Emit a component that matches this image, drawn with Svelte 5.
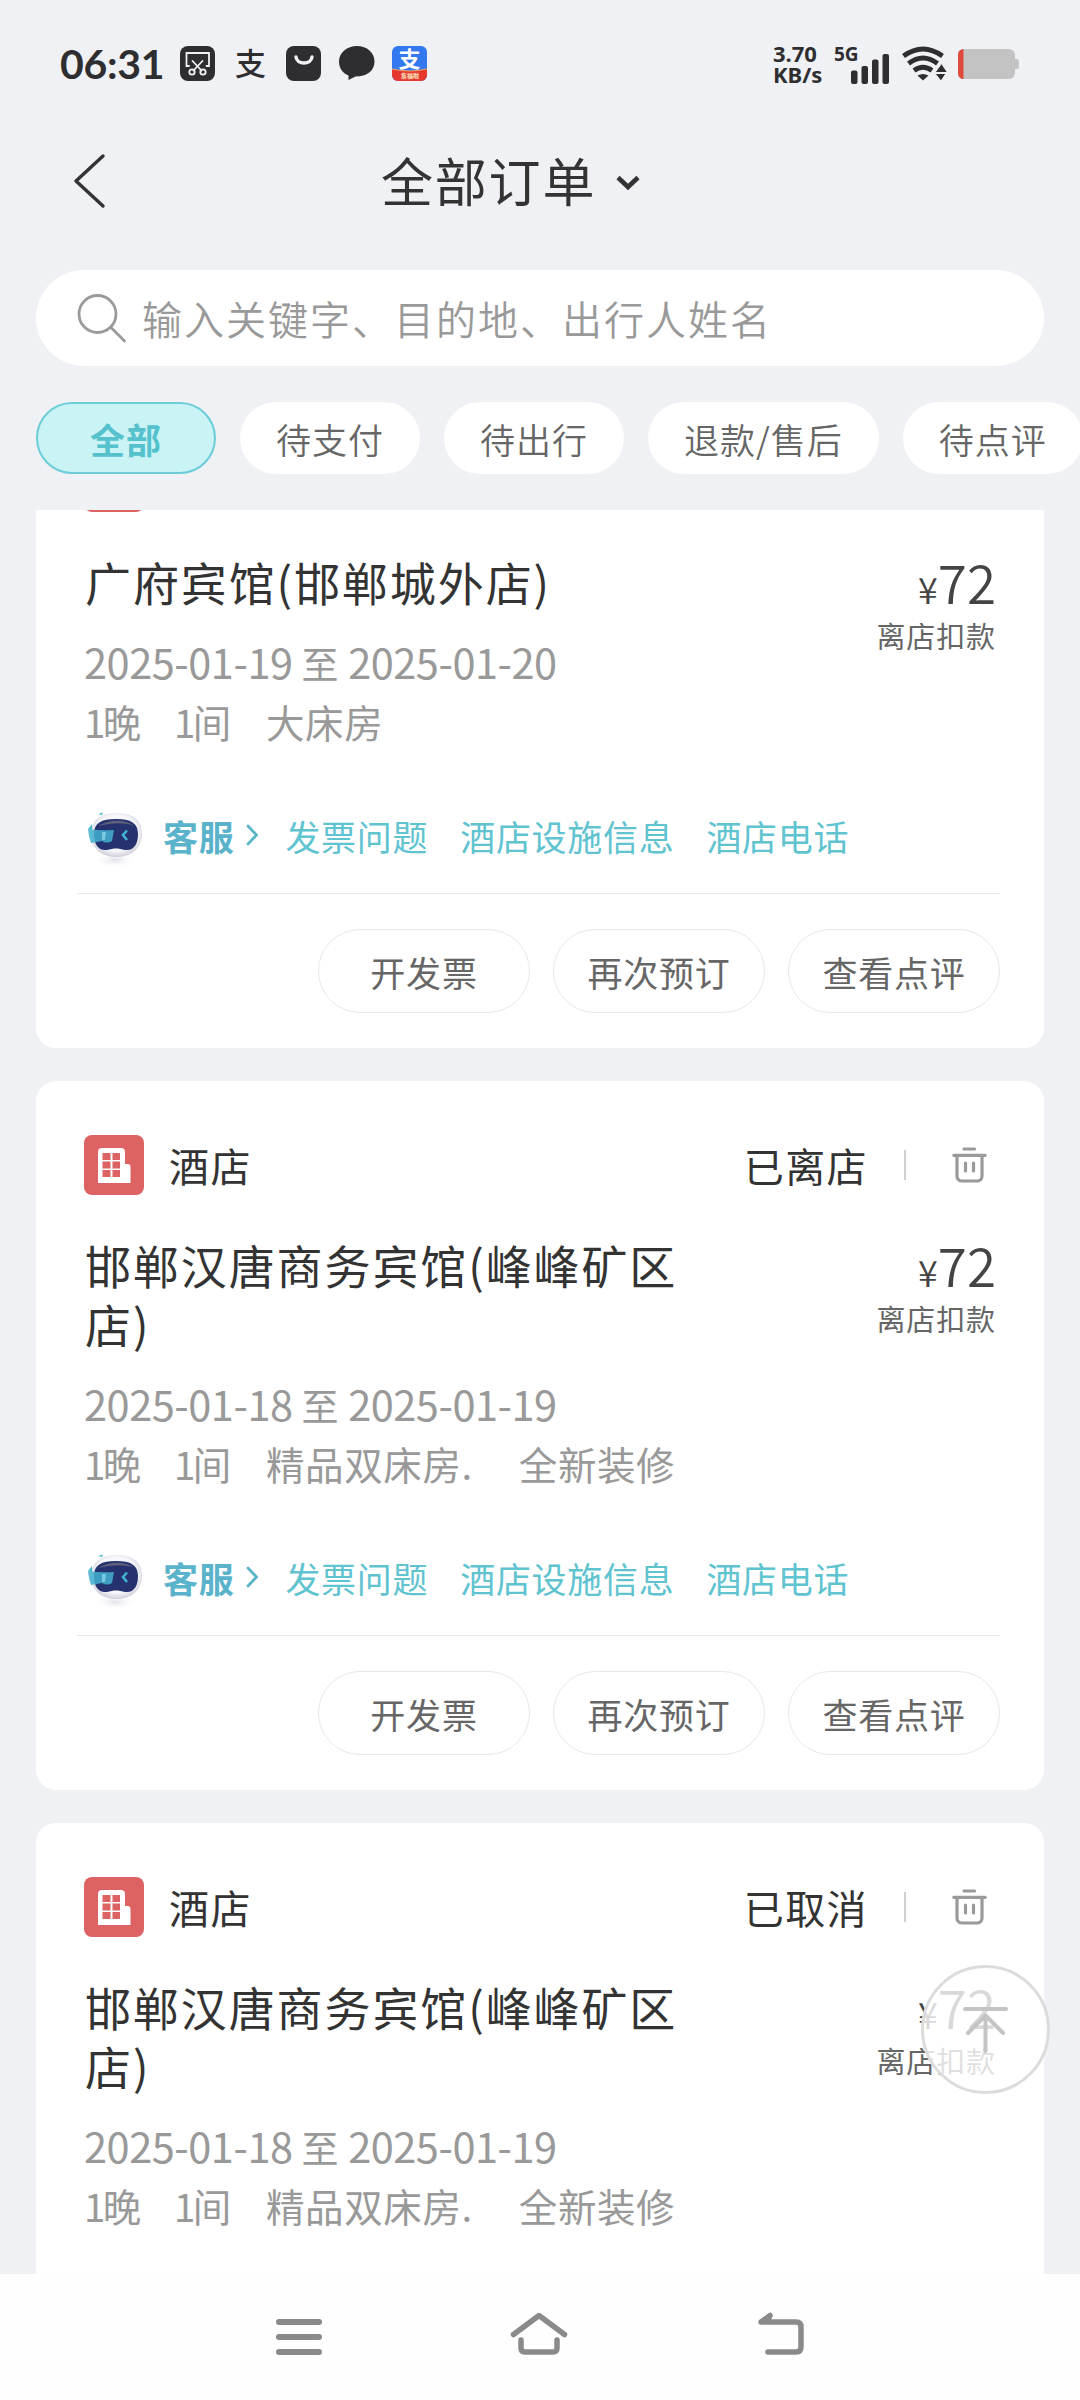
<script lang="ts">
  interface Order {
    status: string;
    hotel: string;
    from: string;
    to: string;
    room: string;
    note?: string;
  }

  const tabs = ['全部', '待支付', '待出行', '退款/售后', '待点评'];
  const questions = ['发票问题', '酒店设施信息', '酒店电话'];
  const actions = ['开发票', '再次预订', '查看点评'];

  const orders: Order[] = [
    {
      status: '已离店',
      hotel: '广府宾馆(邯郸城外店)',
      from: '2025-01-19',
      to: '2025-01-20',
      room: '大床房',
    },
    {
      status: '已离店',
      hotel: '邯郸汉唐商务宾馆(峰峰矿区店)',
      from: '2025-01-18',
      to: '2025-01-19',
      room: '精品双床房.',
      note: '全新装修',
    },
    {
      status: '已取消',
      hotel: '邯郸汉唐商务宾馆(峰峰矿区店)',
      from: '2025-01-18',
      to: '2025-01-19',
      room: '精品双床房.',
      note: '全新装修',
    },
  ];

  let active = $state('全部');
</script>

<div class="screen">
  <div class="status-bar">
    <span class="time">06:31</span>
    <div class="notifications">
      <svg width="36" height="36" viewBox="0 0 36 36">
        <rect width="35" height="35" rx="8" fill="#2e2e30" />
        <g fill="none" stroke="#f0f1f5" stroke-width="1.8" stroke-linecap="round">
          <path d="M9 20H6.500V7H29v13h-2.500" />
          <path d="M12.500 15l9 9.500M22.500 15l-9 9.500" />
          <circle cx="12" cy="26" r="2.700" />
          <circle cx="23" cy="26" r="2.700" />
        </g>
      </svg>
      <svg width="36" height="36" viewBox="0 0 36 36">
        <text class="zhi thin" x="2" y="29" font-size="31" fill="#2e2e30">支</text>
      </svg>
      <svg width="36" height="36" viewBox="0 0 36 36">
        <rect width="35" height="35" rx="8" fill="#2e2e30" />
        <path d="M10 11c1 8 15 8 16 0" fill="none" stroke="#f0f1f5" stroke-width="3.400" stroke-linecap="round" />
      </svg>
      <svg width="36" height="36" viewBox="0 0 36 36">
        <path d="M18 0C8 0 0 6.500 0 15.500c0 6.500 3.500 11.500 9.500 14V34l7-3.500C28 30.500 35.500 25 35.500 15.500 35.500 6.500 28 0 18 0z" fill="#2e2e30" />
      </svg>
      <svg width="36" height="36" viewBox="0 0 36 36">
        <rect width="35" height="35" rx="6" fill="#3478f0" />
        <path d="M0 23q17.500 4 35 0v6a6 6 0 0 1-6 6H6a6 6 0 0 1-6-6z" fill="#e5392f" />
        <path d="M0 23q17.500 4 35 0" fill="none" stroke="#f6a35c" />
        <text class="zhi" x="6.500" y="21" font-size="22" fill="#fff">支</text>
        <text class="zhi" x="9" y="32" font-size="6" fill="#fde6c0">集福啦</text>
      </svg>
    </div>
    <div class="network">
      <span class="speed">3.70<br />KB/s</span>
      <svg width="56" height="40" viewBox="0 0 56 40">
        <text class="gen" x="0" y="16.500">5G</text>
        <g fill="#2e2e30">
          <rect x="17" y="26.500" width="6.500" height="13.500" rx="2" />
          <rect x="27.500" y="22" width="6.500" height="18" rx="2" />
          <rect x="38" y="15.500" width="6.500" height="24.500" rx="2" />
          <rect x="48.500" y="10" width="6.500" height="30" rx="2" />
        </g>
      </svg>
      <svg width="44" height="34" viewBox="0 0 44 34">
        <g fill="none" stroke="#2e2e30" stroke-width="4.800">
          <path d="M1.500 9Q21 -5 40.500 9" />
          <path d="M6.500 16.500Q21 5.500 35.500 16.500" />
          <path d="M12 23.500Q21 17 30 23.500" />
        </g>
        <path d="M15.500 28.500q5.500-3 11 0l-5.500 5z" fill="#2e2e30" />
        <path d="M33 25.500l6.500-9 6 9zM33 26.500h11l-5 7.500z" fill="#2e2e30" stroke="#f0f1f5" />
      </svg>
      <svg width="62" height="31" viewBox="0 0 62 31">
        <rect width="57" height="30" rx="6" fill="#c3c3c3" />
        <path d="M57 10h1.500a2.500 2.500 0 0 1 2.500 2.500v5a2.500 2.500 0 0 1-2.500 2.500H57z" fill="#c3c3c3" />
        <path d="M5.500 0v30A5.500 5.500 0 0 1 0 24.500v-19A5.500 5.500 0 0 1 5.500 0z" fill="#e04a3c" />
      </svg>
    </div>
  </div>

  <header>
    <svg class="back" width="32" height="54" viewBox="0 0 32 54">
      <path d="M29 2L2 27l27 25" fill="none" stroke="#333" stroke-width="3.400" stroke-linecap="round" stroke-linejoin="round" />
    </svg>
    <h1>全部订单</h1>
    <svg class="caret" width="24" height="16" viewBox="0 0 24 16">
      <path d="M2 2.500l10 9.500 10-9.500" fill="none" stroke="#333" stroke-width="4.600" />
    </svg>
  </header>

  <div class="search">
    <svg width="50" height="54" viewBox="0 0 50 54">
      <g fill="none" stroke="#9a9a9a" stroke-width="2.800" stroke-linecap="round">
        <circle cx="21.500" cy="23" r="18.500" />
        <path d="M35 36.500l13.500 13.500" />
      </g>
    </svg>
    <span>输入关键字、目的地、出行人姓名</span>
  </div>

  <nav class="tabs">
    {#each tabs as tab (tab)}
      <button class="tab" class:active={tab === active} onclick={() => (active = tab)}>{tab}</button>
    {/each}
  </nav>

  <main>
    <div class="orders">
      {#each orders as order, index (index)}
        <article class="card">
          <div class="card-head">
            <svg class="hotel-icon" width="60" height="60" viewBox="0 0 60 60">
              <rect width="60" height="60" rx="8" fill="#dc6264" />
              <path d="M14 48V17a4 4 0 0 1 4-4h19a4 4 0 0 1 4 4v12h2.500a3 3 0 0 1 3 3v16z" fill="#fff" />
              <g fill="#dc6264">
                <rect x="18.500" y="18" width="8" height="7" />
                <rect x="28.500" y="18" width="7.500" height="7" />
                <rect x="18.500" y="26.500" width="8" height="7" />
                <rect x="28.500" y="26.500" width="7.500" height="7" />
                <rect x="18.500" y="35" width="8" height="7" />
                <rect x="28.500" y="35" width="7.500" height="7" />
              </g>
            </svg>
            <span class="kind">酒店</span>
            <span class="state">{order.status}</span>
            <i class="bar"></i>
            <svg width="36" height="36" viewBox="0 0 36 36">
              <g fill="none" stroke="#9a9a9a" stroke-width="3.200" stroke-linecap="round">
                <path d="M12 2h10.500M1.800 8.300h31.400M5 9v20a5 5 0 0 0 5 5h15a5 5 0 0 0 5-5V9M13.500 16v8M21.500 16v8" />
              </g>
            </svg>
          </div>

          <div class="summary">
            <h2>{order.hotel}</h2>
            <div class="price">
              <div class="amount"><small>¥</small>72</div>
              <div class="pay">离店扣款</div>
            </div>
          </div>
          <div class="dates">{order.from}<span>至</span>{order.to}</div>
          <div class="room">
            <span class="count">1晚</span>
            <span class="count">1间</span>
            <span class="type">{order.room}</span>
            {#if order.note}<span class="note">{order.note}</span>{/if}
          </div>

          <div class="service">
            <svg class="robot" width="64" height="64" viewBox="0 0 64 64">
              <defs>
                <radialGradient id="shell-{index}" cx="0.5" cy="0.45" r="0.58">
                  <stop offset="0.7" stop-color="#f6f6fb" />
                  <stop offset="1" stop-color="#c9c9d6" />
                </radialGradient>
                <radialGradient id="shade-{index}">
                  <stop offset="0" stop-color="#e2e1ea" />
                  <stop offset="1" stop-color="#fff" stop-opacity="0" />
                </radialGradient>
              </defs>
              <ellipse cx="31" cy="54" rx="22" ry="8" fill="url(#shade-{index})" />
              <path d="M33 7c16 0 25 7 25 21 0 13-10 23-25 23S7 43 7 28C7 14 17 7 33 7z" fill="url(#shell-{index})" />
              <path d="M32 13c15 0 22 4 22 15 0 10-4 16-11 16-5 0-6-1.500-11-1.500S26 44 21 44C14 44 10 38 10 28c0-11 7-15 22-15z" fill="#26326f" />
              <path d="M14 20q18-10 36-1-18-4-36 1z" fill="#5f6079" />
              <path d="M4 23q14 2 26 1l-2 11q-5 3-10 0L7 37q-2-5-3-14z" fill="#43b0d0" opacity="0.85" />
              <path d="M14 8l5-1.500-1 2.500zM4 23l4-5v6z" fill="#45bcc9" />
              <path d="M18 26l4 0-1 8-3 0z" fill="#8edced" opacity="0.7" />
              <path d="M43 24.500L39 29l4 5" fill="none" stroke="#3fb4d6" stroke-width="2.500" />
            </svg>
            <strong>客服</strong>
            <svg class="more" width="14" height="24" viewBox="0 0 14 24">
              <path d="M2 3l8.500 9L2 21" fill="none" stroke="#5ab5c9" stroke-width="2.800" stroke-linecap="round" />
            </svg>
            {#each questions as question}
              <a href="#{question}">{question}</a>
            {/each}
          </div>

          <div class="actions">
            {#each actions as action}
              <button>{action}</button>
            {/each}
          </div>
        </article>
      {/each}
    </div>
    <button class="to-top" aria-label="回到顶部">
      <svg width="48" height="50" viewBox="0 0 48 50">
        <path d="M3 4h41M23.500 10.500v35.500M6 28L23.500 10.500 41 28" fill="none" stroke="#c4c4c4" stroke-width="4" stroke-linecap="round" stroke-linejoin="round" />
      </svg>
    </button>
  </main>

  <footer>
    <svg width="46" height="46" viewBox="0 0 46 46">
      <path d="M3 8h40M3 23h40M3 38h40" fill="none" stroke="#8a8a8a" stroke-width="6" stroke-linecap="round" />
    </svg>
    <svg width="60" height="46" viewBox="0 0 60 46">
      <g fill="none" stroke="#8a8a8a" stroke-width="5.500" stroke-linecap="round" stroke-linejoin="round">
        <path d="M4.500 20.500L30 1.500l25.500 19" />
        <path d="M12 26v8q0 4 4 4h28q4 0 4-4v-8" />
      </g>
    </svg>
    <svg width="50" height="46" viewBox="0 0 50 46">
      <path d="M12 38h28q5 0 5-5V13q0-5-5-5H5l9-6.500" fill="none" stroke="#8a8a8a" stroke-width="5.500" stroke-linecap="round" stroke-linejoin="round" />
      <path d="M4 7l11-6 1 7z" fill="#8a8a8a" />
    </svg>
  </footer>
</div>

<style>
  :global(body) {
    margin: 0;
    background: #f0f1f5;
  }

  .screen {
    display: flex;
    flex-direction: column;
    width: 1080px;
    height: 2400px;
    overflow: hidden;
    background: #f0f1f5;
    color: #333;
    font-family: 'Noto Sans CJK SC', sans-serif;
    font-weight: 400;
  }

  svg {
    display: block;
    flex: none;
    overflow: visible;
  }

  button {
    font: inherit;
    padding: 0;
    box-sizing: border-box;
    white-space: nowrap;
  }

  .status-bar {
    display: flex;
    align-items: center;
    height: 128px;
    padding: 0 60px;
    color: #2e2e30;
  }

  .time {
    width: 120px;
    font: 700 41px/50px Lato, sans-serif;
    letter-spacing: -0.300px;
  }

  .notifications {
    display: flex;
    gap: 17px;
  }

  .zhi {
    font-family: 'Noto Sans CJK SC', sans-serif;
    font-weight: 700;
  }

  .zhi.thin {
    font-weight: 500;
  }

  .network {
    display: flex;
    align-items: center;
    margin-left: auto;
  }

  .speed {
    width: 61px;
    font: 700 22px/21px 'Noto Sans', sans-serif;
  }

  .gen {
    font: 700 19px 'Noto Sans', sans-serif;
    fill: #2e2e30;
  }

  .network svg + svg {
    margin-left: 12px;
  }

  header {
    display: flex;
    align-items: center;
    height: 106px;
    padding-left: 74px;
  }

  h1 {
    margin: 0 20px 3px 275px;
    font-size: 52px;
    font-weight: 400;
    letter-spacing: 1.800px;
  }

  .caret {
    margin-top: 3px;
  }

  .search {
    display: flex;
    align-items: center;
    height: 96px;
    margin: 36px 36px 0;
    padding-left: 40px;
    border-radius: 48px;
    background: #fff;
    color: #999;
    font-size: 40px;
    font-weight: 350;
    letter-spacing: 2px;
  }

  .search span {
    margin-left: 16px;
  }

  .tabs {
    display: flex;
    gap: 24px;
    margin: 36px 0 36px 36px;
  }

  .tab {
    flex: none;
    height: 72px;
    min-width: 180px;
    padding: 0 36px;
    border: 0;
    border-radius: 36px;
    background: #fff;
    color: #666;
    font-size: 35px;
    font-weight: 350;
    letter-spacing: 1px;
  }

  .tab.active {
    border: 2px solid #6cccd8;
    background: #c9f3f5;
    color: #55c1cd;
    font-weight: 700;
  }

  main {
    position: relative;
    flex: 1;
    min-height: 0;
    overflow: hidden;
  }

  /* the list is scrolled, so the first card starts above the viewport */
  .orders {
    display: flex;
    flex-direction: column;
    gap: 33px;
    margin: -112px 36px 0;
  }

  .card {
    display: flex;
    flex-direction: column;
    padding: 54px 44px 35px 48px;
    border-radius: 20px;
    background: #fff;
  }

  .card-head {
    display: flex;
    align-items: center;
    height: 60px;
    padding-right: 12px;
    font-size: 40px;
    letter-spacing: 1.400px;
  }

  .kind {
    margin-left: 25px;
  }

  .state {
    margin-left: auto;
  }

  .bar {
    width: 2px;
    height: 30px;
    margin: 0 46px 0 36px;
    background: #d0d0d0;
  }

  .summary {
    display: flex;
    justify-content: space-between;
    margin-top: 40px;
  }

  h2 {
    width: 610px;
    margin: 0 0 0 1px;
    font-size: 46px;
    font-weight: 400;
    line-height: 59px;
    letter-spacing: 1.900px;
  }

  .price {
    padding-right: 4px;
    text-align: right;
    color: #444;
  }

  .price > div {
    height: 59px;
  }

  .amount {
    font-size: 53px;
    font-weight: 350;
    line-height: 59px;
  }

  .amount small {
    font-size: 36px;
  }

  .price .pay {
    height: 0;
    line-height: 48px;
    color: #666;
    font-size: 29px;
    letter-spacing: 0.900px;
  }

  .dates,
  .room {
    height: 60px;
    color: #999;
    line-height: 60px;
    white-space: nowrap;
  }

  .dates {
    margin-top: 20px;
    font-size: 41.500px;
    letter-spacing: -0.450px;
  }

  .dates span {
    margin: 0 10px 0 9px;
    font-size: 37px;
  }

  .room {
    display: flex;
    font-size: 38.500px;
    letter-spacing: 0.600px;
  }

  .count {
    width: 90px;
    letter-spacing: -2.500px;
  }

  .type {
    margin-left: 2px;
  }

  .note {
    margin-left: 46px;
  }

  .service {
    display: flex;
    align-items: center;
    height: 60px;
    margin-top: 54px;
    font-size: 35px;
    letter-spacing: 0.700px;
  }

  .robot {
    margin-top: 5px;
  }

  .service strong {
    margin: 0 12px 0 15px;
    color: #5ab3cb;
    font-weight: 700;
  }

  .service a {
    margin-left: 32px;
    color: #5fc3d0;
    text-decoration: none;
  }

  .service .more + a {
    margin-left: 25px;
  }

  .actions {
    display: flex;
    justify-content: flex-end;
    gap: 23px;
    margin: 28px 0 0 -7px;
    padding-top: 35px;
    border-top: 1px solid #e8e8e8;
  }

  .actions button {
    width: 212px;
    height: 84px;
    border: 1px solid #e8e8e8;
    border-radius: 42px;
    background: #fff;
    color: #666;
    font-size: 35px;
    letter-spacing: 0.800px;
  }

  .to-top {
    position: absolute;
    top: 1455px;
    right: 30px;
    display: flex;
    align-items: center;
    justify-content: center;
    width: 129px;
    height: 129px;
    border: 3px solid #dcdcdc;
    border-radius: 50%;
    background: rgba(255, 255, 255, 0.8);
  }

  footer {
    display: flex;
    justify-content: center;
    gap: 187px;
    flex: none;
    height: 86px;
    padding: 40px 0 0 2px;
    background: #fefefe;
  }
</style>
